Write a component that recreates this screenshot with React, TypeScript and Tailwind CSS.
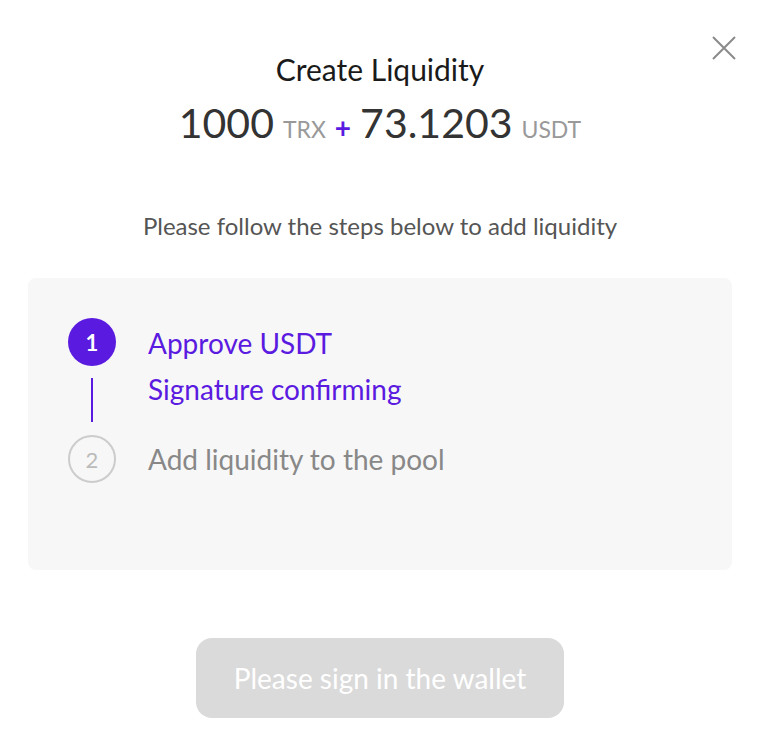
import React from "react";

function CloseIcon() {
  return (
    <svg width="26" height="26" viewBox="0 0 26 26" fill="none" stroke="#8a8a8a" strokeWidth="2">
      <path d="M2 2 L24 24 M24 2 L2 24" />
    </svg>
  );
}

export default function App() {
  return (
    <div
      className="relative w-[766px] h-[730px] bg-white flex flex-col items-center"
      style={{ fontFamily: "Lato, 'Open Sans', sans-serif" }}
    >
      <button className="absolute right-[29px] top-[35px]">
        <CloseIcon />
      </button>

      <div className="w-[760px] flex flex-col items-center self-start">
        <h1 className="mt-[52px] text-[30px] leading-[34px] text-[#1a1a1a]">Create Liquidity</h1>
        <div className="mt-[12px] flex items-baseline gap-[9px] leading-[50px]">
          <span className="text-[41px] text-[#333]">1000</span>
          <span className="text-[23px] text-[#999]">TRX</span>
          <span className="text-[28px] text-[#5a1ae0] font-bold">+</span>
          <span className="text-[41px] text-[#333]">73.1203</span>
          <span className="text-[23px] text-[#999]">USDT</span>
        </div>

        <p className="mt-[57px] text-[24px] leading-[30px] text-[#555]">
          Please follow the steps below to add liquidity
        </p>

        <div className="mt-[37px] w-[704px] h-[292px] bg-[#f7f7f7] rounded-[8px] pl-[40px] pt-[40px]">
          <div className="flex gap-[32px]">
            <div className="flex flex-col items-center">
              <div className="w-[48px] h-[48px] rounded-full bg-[#5a1ae0] text-white text-[22px] font-bold flex items-center justify-center">
                1
              </div>
              <div className="mt-[12px] w-[2px] h-[44px] bg-[#5a1ae0]" />
            </div>
            <div className="flex flex-col text-[#5a1ae0] text-[28px] leading-[46px] pt-[2px]">
              <span>Approve USDT</span>
              <span>Signature confirming</span>
            </div>
          </div>
          <div className="mt-[13px] flex items-center gap-[32px]">
            <div className="w-[48px] h-[48px] rounded-full border-2 border-[#ccc] text-[#bbb] text-[22px] flex items-center justify-center">
              2
            </div>
            <span className="text-[28px] text-[#888]">Add liquidity to the pool</span>
          </div>
        </div>

        <button className="mt-[68px] w-[368px] h-[80px] rounded-[16px] bg-[#dadada] text-white text-[28px]">
          Please sign in the wallet
        </button>
      </div>
    </div>
  );
}
